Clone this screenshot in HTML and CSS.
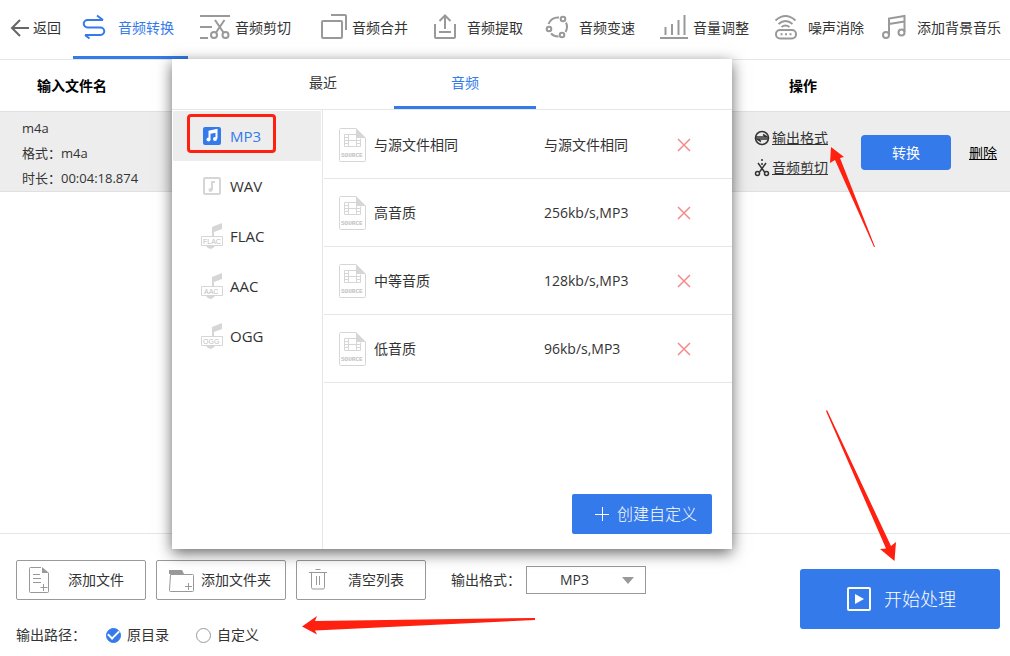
FILE: index.html
```html
<!DOCTYPE html>
<html lang="zh-CN">
<head>
<meta charset="utf-8">
<title>音频转换</title>
<link rel="stylesheet" href="styles.css">
</head>
<body>
<div class="app">
  <nav class="toolbar">
    <button class="tool back" type="button"><svg width="18" height="18" viewBox="0 0 18 18"><path d="M1 9h17M9 1L1 9l8 8"/></svg>返回</button>
    <button class="tool active" type="button"><svg width="41" height="32" viewBox="0 0 41 32"><path d="M26 8H10.500a3.750 3.750 0 0 0 0 7.500H23.500a3.500 3.500 0 0 1 0 7.500H8M20 3.500L26 8M12.500 26.500L8 23"/></svg>音频转换</button>
    <button class="tool" type="button"><svg width="43" height="32" viewBox="0 0 43 32"><path d="M8 4h30M8 15h12M8 26h8M23 8l8.500 12.500M32.500 8L24 20.500"/><circle cx="22" cy="23" r="3"/><circle cx="33.500" cy="23" r="3"/></svg>音频剪切</button>
    <button class="tool" type="button"><svg width="43" height="32" viewBox="0 0 43 32"><rect x="13" y="9" width="20" height="17" rx="1"/><path d="M22 3h14a1 1 0 0 1 1 1v14"/></svg>音频合并</button>
    <button class="tool" type="button"><svg width="41" height="32" viewBox="0 0 41 32"><path d="M9 12v13a1 1 0 0 0 1 1h18a1 1 0 0 0 1-1V12M19 17V4M13.500 9L19 3.500 24.500 9M13 20h12"/></svg>音频提取</button>
    <button class="tool" type="button"><svg width="38" height="32" viewBox="0 0 38 32"><path d="M7.500 12A10 10 0 0 1 18 5.500M10 21.500a10 10 0 0 0 7.500 3M25 10.500a10 10 0 0 1-.5 9.500"/><circle cx="22" cy="7" r="2.300"/><circle cx="8" cy="17" r="2.300"/><circle cx="21" cy="23" r="2.300"/></svg>音频变速</button>
    <button class="tool" type="button"><svg width="40" height="32" viewBox="0 0 40 32"><path d="M7 26h28M12.500 15v8M19 12v11M25.500 8v15M31.500 3v20"/></svg>音量调整</button>
    <button class="tool" type="button"><svg width="41" height="32" viewBox="0 0 41 32"><path d="M8.500 8.500q10-9 20 0M11.500 12q7-6 14 0M14.500 15q4-3 8 0"/><rect x="9" y="18" width="20" height="8.500" rx="4"/><path d="M13.500 22.300h2M18 22.300h2M22.500 22.300h2"/></svg>噪声消除</button>
    <button class="tool" type="button"><svg width="35" height="32" viewBox="0 0 35 32"><path d="M7 23V6.500L22.500 4v16M7 12l15.500-2.500"/><circle cx="4" cy="23" r="3"/><circle cx="19.500" cy="20.500" r="3"/></svg>添加背景音乐</button>
  </nav>

  <main class="files">
    <table class="file-table">
      <thead>
        <tr><th class="col-name">输入文件名</th><th class="col-action">操作</th></tr>
      </thead>
      <tbody>
        <tr>
          <td class="file-info"><p>m4a</p><p>格式：m4a</p><p>时长：00:04:18.874</p></td>
          <td class="file-actions">
            <div class="actions">
              <div class="links">
                <a href="#"><svg width="16" height="16" viewBox="0 0 16 16"><circle cx="8" cy="8" r="6.500"/><path d="M1 7h12L9 4.500M15 9H3l4 2.500"/></svg><span>输出格式</span></a>
                <a href="#"><svg width="16" height="18" viewBox="0 0 16 18"><path d="M4 4l6.500 9M12 4l-6.500 9M8 0v2M8 4v2"/><circle cx="3.500" cy="14.500" r="2"/><circle cx="12.500" cy="14.500" r="2"/></svg><span>音频剪切</span></a>
              </div>
              <button class="convert" type="button">转换</button>
              <a class="delete" href="#">删除</a>
            </div>
          </td>
        </tr>
      </tbody>
    </table>
  </main>

  <footer class="footer">
    <div class="settings">
      <div class="row">
        <button class="file-btn" type="button"><svg width="28" height="28" viewBox="0 0 28 28"><path d="M14 1.500H3.500a1 1 0 0 0-1 1v23a1 1 0 0 0 1 1h17a1 1 0 0 0 1-1V7M6 8.500h7M6 12.500h8M6 16.500h8M13.500 21.500h7M16.500 18v7"/><path class="solid" d="M15 1v6h7z"/></svg><span>添加文件</span></button>
        <button class="file-btn" type="button"><svg width="28" height="28" viewBox="0 0 28 28"><path d="M3.500 8.500h22a1 1 0 0 1 1 1v15a1 1 0 0 1-1 1h-22a1 1 0 0 1-1-1zM18 20.500h7M21.500 17v7"/><path class="solid" d="M2 8V4h13l2 4z"/></svg><span>添加文件夹</span></button>
        <button class="file-btn" type="button"><svg width="28" height="28" viewBox="0 0 28 28"><path d="M2 6.500h18M8.500 3.500h5M4.500 6.500v15a1.500 1.500 0 0 0 1.500 1.500h10a1.500 1.500 0 0 0 1.500-1.500v-15M9.500 10v9M12.500 10v9"/></svg><span>清空列表</span></button>
        <label class="format-label" for="format">输出格式：</label>
        <div class="select-box">
          <select id="format"><option>MP3</option><option>WAV</option><option>FLAC</option><option>AAC</option><option>OGG</option></select>
          <svg class="caret" width="12" height="7" viewBox="0 0 12 7"><path d="M0 0h12L6 7z"/></svg>
        </div>
      </div>
      <div class="row paths">
        <span class="path-label">输出路径：</span>
        <label><input type="radio" name="path" checked>原目录</label>
        <label><input type="radio" name="path">自定义</label>
      </div>
    </div>
    <button class="start" type="button"><svg width="24" height="24" viewBox="0 0 24 24"><rect x="1" y="1" width="22" height="22" rx="1"/><path d="M8 7l9 5-9 5z"/></svg>开始处理</button>
  </footer>

  <section class="popup" aria-label="输出格式">
    <div class="tabs"><button type="button">最近</button><button class="active" type="button">音频</button></div>
    <div class="popup-body">
      <div class="formats">
        <button class="active" type="button"><svg width="24" height="28" viewBox="0 0 24 28"><rect class="fill" x="3" y="5" width="18" height="18" rx="2"/><path class="white-line" d="M9.500 17.500v-8l7-1.500v8.500M9.500 11l7-1.500"/><circle class="white" cx="8.500" cy="17.500" r="2"/><circle class="white" cx="15" cy="17" r="2"/></svg><span>MP3</span></button>
        <button type="button"><svg width="24" height="28" viewBox="0 0 24 28"><rect class="line" x="4" y="6" width="16" height="16" rx="1"/><path class="line" d="M12 18V10h3"/><circle class="fill" cx="10.500" cy="18" r="2"/></svg><span>WAV</span></button>
        <button type="button"><svg width="24" height="28" viewBox="0 0 24 28"><path class="fill" d="M12 15V5l10-4v6l-8 3v5zM6 24h9q-4.500 6-9 0z"/><path class="thin" d="M1.500 14.500h21v9h-21z"/><text x="3" y="22">FLAC</text></svg><span>FLAC</span></button>
        <button type="button"><svg width="24" height="28" viewBox="0 0 24 28"><path class="fill" d="M12 15V5l10-4v6l-8 3v5zM6 24h9q-4.500 6-9 0z"/><path class="thin" d="M1.500 14.500h21v9h-21z"/><text x="4" y="22">AAC</text></svg><span>AAC</span></button>
        <button type="button"><svg width="24" height="28" viewBox="0 0 24 28"><path class="fill" d="M12 15V5l10-4v6l-8 3v5zM6 24h9q-4.500 6-9 0z"/><path class="thin" d="M1.500 14.500h21v9h-21z"/><text x="3" y="22">OGG</text></svg><span>OGG</span></button>
      </div>
      <div class="presets">
        <ul>
          <li><svg class="source" width="28" height="34" viewBox="0 0 28 34"><path class="thin" d="M18 .5H2.500a1 1 0 0 0-1 1v31a1 1 0 0 0 1 1h24a1 1 0 0 0 1-1V10M6.500 6.500h12M6.500 18.500h16v-8M6.500 6.500v12M10.500 6.500v12M18.500 8.500v10M6.500 12.500h16M6.500 9.500h4M6.500 15.500h4M18.500 15.500h4"/><path class="fill" d="M18 0v10h10z"/><text x="3" y="29">SOURCE</text></svg><span class="name">与源文件相同</span><span class="rate">与源文件相同</span><button type="button" aria-label="删除"><svg width="14" height="14" viewBox="0 0 14 14"><path d="M1 1l12 12M13 1L1 13"/></svg></button></li>
          <li><svg class="source" width="28" height="34" viewBox="0 0 28 34"><path class="thin" d="M18 .5H2.500a1 1 0 0 0-1 1v31a1 1 0 0 0 1 1h24a1 1 0 0 0 1-1V10M6.500 6.500h12M6.500 18.500h16v-8M6.500 6.500v12M10.500 6.500v12M18.500 8.500v10M6.500 12.500h16M6.500 9.500h4M6.500 15.500h4M18.500 15.500h4"/><path class="fill" d="M18 0v10h10z"/><text x="3" y="29">SOURCE</text></svg><span class="name">高音质</span><span class="rate">256kb/s,MP3</span><button type="button" aria-label="删除"><svg width="14" height="14" viewBox="0 0 14 14"><path d="M1 1l12 12M13 1L1 13"/></svg></button></li>
          <li><svg class="source" width="28" height="34" viewBox="0 0 28 34"><path class="thin" d="M18 .5H2.500a1 1 0 0 0-1 1v31a1 1 0 0 0 1 1h24a1 1 0 0 0 1-1V10M6.500 6.500h12M6.500 18.500h16v-8M6.500 6.500v12M10.500 6.500v12M18.500 8.500v10M6.500 12.500h16M6.500 9.500h4M6.500 15.500h4M18.500 15.500h4"/><path class="fill" d="M18 0v10h10z"/><text x="3" y="29">SOURCE</text></svg><span class="name">中等音质</span><span class="rate">128kb/s,MP3</span><button type="button" aria-label="删除"><svg width="14" height="14" viewBox="0 0 14 14"><path d="M1 1l12 12M13 1L1 13"/></svg></button></li>
          <li><svg class="source" width="28" height="34" viewBox="0 0 28 34"><path class="thin" d="M18 .5H2.500a1 1 0 0 0-1 1v31a1 1 0 0 0 1 1h24a1 1 0 0 0 1-1V10M6.500 6.500h12M6.500 18.500h16v-8M6.500 6.500v12M10.500 6.500v12M18.500 8.500v10M6.500 12.500h16M6.500 9.500h4M6.500 15.500h4M18.500 15.500h4"/><path class="fill" d="M18 0v10h10z"/><text x="3" y="29">SOURCE</text></svg><span class="name">低音质</span><span class="rate">96kb/s,MP3</span><button type="button" aria-label="删除"><svg width="14" height="14" viewBox="0 0 14 14"><path d="M1 1l12 12M13 1L1 13"/></svg></button></li>
        </ul>
        <button class="create" type="button"><svg width="14" height="14" viewBox="0 0 14 14"><path d="M0 7.500h14M7.500 0v14"/></svg>创建自定义</button>
      </div>
    </div>
  </section>

  <div class="highlight"></div>
  <svg class="pointer to-format" width="48" height="102" viewBox="0 0 48 102"><path d="M1 0l13 10-4 1L45 100h-1L5 13l-5 3z"/></svg>
  <svg class="pointer to-start" width="72" height="152" viewBox="0 0 72 152"><path d="M2 0l64 136 5-4-1.500 19L55 139l6-.5L1 1z"/></svg>
  <svg class="pointer to-path" width="234" height="20" viewBox="0 0 234 20"><path d="M0 10.500L15 0l-2 5L233 2v2L13 14.500l2 4z"/></svg>
</div>
</body>
</html>
```
FILE: styles.css
```css
* { box-sizing: border-box; }
body {
  margin: 0;
  font: 14px/20px "Open Sans", "Noto Sans CJK SC", sans-serif;
  color: #333;
  background: #fff;
}
button, select, input { font: inherit; color: inherit; margin: 0; }
button { border: 0; padding: 0; background: none; cursor: pointer; white-space: nowrap; }
p, ul { margin: 0; padding: 0; list-style: none; }
svg { flex: none; display: block; fill: none; overflow: visible; }
.app { position: relative; display: flex; flex-direction: column; min-height: 100vh; }

.toolbar { display: flex; border-bottom: 1px solid #e6e6e6; }
.tool {
  display: flex;
  align-items: center;
  height: 59px;
  padding: 0 14px 0 4px;
  border-bottom: 3px solid transparent;
}
.tool svg { stroke: #999; stroke-width: 2; }
.tool.back { gap: 4px; padding: 0 12px 0 11px; }
.tool.back svg { stroke: #666; }
.tool.active { color: #347aea; border-color: #347aea; }
.tool.active svg { stroke: #347aea; }

.files { flex: 1; }
.file-table { width: 100%; border-collapse: separate; border-spacing: 0; }
.file-table th { height: 51px; padding: 0 0 0 37px; text-align: left; color: #000; }
.file-table .col-action { width: 260px; padding-left: 39px; }
.file-table td { padding: 0; background: #ededed; border: solid #e0e0e0; border-width: 1px 0; }
.file-table .file-info { padding: 4px 0 0 22px; font-size: 13px; line-height: 25px; }
.file-table .file-actions { padding-top: 2px; }
.actions { display: flex; align-items: center; padding-left: 4px; }
.links { display: grid; gap: 10px; width: 107px; }
.links a { display: flex; align-items: center; gap: 2px; height: 20px; color: #333; }
.links svg { stroke: #333; stroke-width: 1.5; }
.convert { width: 90px; height: 35px; border-radius: 4px; background: #347aea; color: #fff; }
.delete { margin-left: 18px; color: #000; }

.footer {
  display: flex;
  justify-content: space-between;
  align-items: flex-start;
  padding: 26px 10px 9px 16px;
  border-top: 1px solid #e6e6e6;
}
.settings { display: grid; gap: 23px; }
.row { display: flex; align-items: center; }
.file-btn {
  display: flex;
  align-items: center;
  width: 130px;
  height: 40px;
  margin-right: 10px;
  padding: 0 12px 0 10px;
  border: 1px solid #999;
  border-radius: 2px;
}
.file-btn svg { stroke: #999; }
.file-btn span { flex: 1; text-align: center; padding-left: 4px; }
.solid { fill: #999; stroke: none; }
.format-label { width: 75px; margin-left: 15px; }
.select-box { position: relative; width: 120px; }
.select-box select {
  display: block;
  width: 100%;
  height: 28px;
  padding: 0 33px;
  border: 1px solid #999;
  border-radius: 0;
  background: #fff;
  appearance: none;
}
.caret { position: absolute; right: 12px; top: 11px; fill: #999; pointer-events: none; }
.paths { height: 24px; }
.path-label { width: 90px; }
.paths label { display: flex; align-items: center; gap: 6px; width: 90px; }
.paths input {
  display: grid;
  place-items: center;
  width: 15px;
  height: 15px;
  border: 1px solid #999;
  border-radius: 50%;
  appearance: none;
}
.paths input:checked { border-color: #347aea; background: #347aea; }
.paths input:checked::after {
  content: "";
  width: 9px;
  height: 5px;
  margin-bottom: 3px;
  border: solid #fff;
  border-width: 0 0 2px 2px;
  transform: rotate(-45deg);
}
.start {
  display: flex;
  align-items: center;
  justify-content: center;
  gap: 13px;
  width: 200px;
  height: 60px;
  margin-top: 9px;
  padding-left: 3px;
  border-radius: 3px;
  background: #347aea;
  color: #fff;
  font-size: 18px;
  font-weight: 300;
}
.start svg { stroke: #fff; stroke-width: 2; }
.start path { fill: #fff; stroke: none; }

.popup {
  position: absolute;
  top: 59px;
  left: 172px;
  display: flex;
  flex-direction: column;
  width: 560px;
  height: 490px;
  background: #fff;
  box-shadow: 0 4px 14px rgba(0, 0, 0, 0.6);
}
.tabs { display: flex; padding-left: 80px; border-bottom: 1px solid #e6e6e6; }
.tabs button { width: 142px; height: 50px; border-bottom: 3px solid transparent; }
.tabs .active { color: #347aea; border-bottom-color: #347aea; }
.popup-body { display: flex; flex: 1; }
.formats { width: 151px; padding: 1px 1px 0; border-right: 1px solid #e6e6e6; font-size: 15px; }
.formats button { display: flex; align-items: center; gap: 6px; width: 100%; height: 50px; padding-left: 27px; }
.formats .active { background: #ededed; color: #347aea; }
.fill { fill: #d6d6d6; }
.active .fill { fill: #347aea; }
.white { fill: #fff; }
.white-line { stroke: #fff; stroke-width: 2; }
.line { stroke: #d6d6d6; stroke-width: 2; }
.thin { stroke: #d6d6d6; fill: #fff; }
.popup text { fill: #c0c0c0; font: 7px "Liberation Sans", sans-serif; }
.popup .source text { font: bold 6px "Liberation Mono", monospace; }
.presets { display: flex; flex: 1; flex-direction: column; padding: 1px 0 0 1px; }
.presets li { display: flex; align-items: center; height: 68px; padding-left: 14px; border-bottom: 1px solid #e6e6e6; }
.presets .name { width: 170px; margin-left: 8px; }
.presets .rate { width: 133px; }
.presets li button svg { stroke: #f58a8a; stroke-width: 1.5; }
.create {
  display: flex;
  align-items: center;
  justify-content: center;
  align-self: flex-end;
  gap: 8px;
  width: 140px;
  height: 40px;
  margin: auto 20px 15px 0;
  padding-left: 8px;
  border-radius: 2px;
  background: #347aea;
  color: #fff;
  font-size: 16px;
  font-weight: 300;
}
.create svg { stroke: #fff; }

.highlight { position: absolute; left: 187px; top: 114px; width: 89px; height: 39px; border: 3px solid #ff2010; border-radius: 4px; }
.pointer { position: absolute; fill: #ff2010; pointer-events: none; }
.to-format { left: 830px; top: 147px; }
.to-start { left: 825px; top: 410px; }
.to-path { left: 302px; top: 616px; }
```
